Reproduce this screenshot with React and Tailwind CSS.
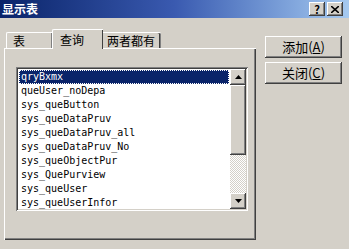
import React from 'react';

const raised =
  'shadow-[inset_-1px_-1px_#404040,inset_1px_1px_#ffffff,inset_-2px_-2px_#808080,inset_2px_2px_#d4d0c8]';
const sunken =
  'shadow-[inset_1px_1px_#808080,inset_-1px_-1px_#ffffff,inset_2px_2px_#404040,inset_-2px_-2px_#d4d0c8]';

const queries = [
  'qryBxmx',
  'queUser_noDepa',
  'sys_queButton',
  'sys_queDataPruv',
  'sys_queDataPruv_all',
  'sys_queDataPruv_No',
  'sys_queObjectPur',
  'sys_QuePurview',
  'sys_queUser',
  'sys_queUserInfor',
];

function TitleButton({ children }) {
  return (
    <div
      className={`w-[16px] h-[14px] bg-[#d4d0c8] ${raised} flex items-center justify-center text-black text-[11px] font-bold leading-none`}
    >
      {children}
    </div>
  );
}

function ScrollArrow({ up }) {
  return (
    <div className={`w-[16px] h-[16px] bg-[#d4d0c8] ${raised} flex items-center justify-center`}>
      <svg width="7" height="4" viewBox="0 0 7 4">
        {up ? <path d="M3.5 0 L7 4 L0 4 Z" fill="#000" /> : <path d="M0 0 L7 0 L3.5 4 Z" fill="#000" />}
      </svg>
    </div>
  );
}

function Button({ label, hot }) {
  return (
    <div
      className={`w-[77px] h-[22px] bg-[#d4d0c8] ${raised} flex items-center justify-center text-[13px] text-black`}
    >
      {label}(<span className="underline">{hot}</span>)
    </div>
  );
}

export default function App() {
  return (
    <div
      className="w-[349px] h-[249px] bg-[#d4d0c8] overflow-hidden"
      style={{ fontFamily: '"Noto Sans CJK SC", "Liberation Sans", sans-serif' }}
    >
      {/* title bar */}
      <div className="h-[18px] flex items-center justify-between pl-[2px] pr-[6px] bg-gradient-to-r from-[#0a246a] via-[#3a5ab0] to-[#a6caf0]">
        <span className="text-white text-[12px] font-bold leading-none">显示表</span>
        <div className="flex gap-[2px]">
          <TitleButton>?</TitleButton>
          <TitleButton>
            <svg width="8" height="7" viewBox="0 0 8 7">
              <path d="M0 0 L8 7 M8 0 L0 7" stroke="#000" strokeWidth="1.6" />
            </svg>
          </TitleButton>
        </div>
      </div>

      <div className="flex pt-[11px]">
        {/* tabs + panel */}
        <div className="ml-[4px] w-[252px]">
          <div className="flex items-end h-[19px] pl-[2px]">
            <div className="w-[46px] h-[16px] border-t border-l border-white shadow-[inset_-1px_0_#808080] rounded-tl-[2px] text-[12px] leading-none flex items-center pl-[6px] text-black">
              表
            </div>
            <div className="w-[51px] h-[20px] -mb-[1px] bg-[#d4d0c8] border-t border-l border-white shadow-[inset_-1px_0_#404040] rounded-tl-[2px] text-[12px] leading-none flex items-center pl-[7px] text-black relative z-10">
              查询
            </div>
            <div className="w-[58px] h-[16px] border-t border-white shadow-[inset_-1px_0_#808080,inset_-2px_0_#404040] rounded-tr-[2px] text-[12px] leading-none flex items-center pl-[4px] text-black">
              两者都有
            </div>
          </div>
          <div className="h-[192px] border-t border-l border-white shadow-[inset_-1px_-1px_#404040,inset_-2px_-2px_#808080] pt-[18px] pl-[11px]">
            <div className={`w-[232px] h-[144px] bg-white ${sunken} p-[2px] flex`}>
              <div
                className="flex-1 pt-[1px] pl-[1px] pr-[1px]"
                style={{ fontFamily: '"DejaVu Sans Mono", monospace' }}
              >
                {queries.map((q, i) => (
                  <div
                    key={q}
                    className={`h-[14px] text-[10px] leading-[14px] pl-[2px] ${
                      i === 0
                        ? 'bg-[#0a246a] text-white outline-1 outline-dotted outline-[#fff] -outline-offset-1'
                        : 'text-black'
                    }`}
                  >
                    {q}
                  </div>
                ))}
              </div>
              <div className="w-[16px] flex flex-col">
                <ScrollArrow up />
                <div className={`h-[70px] bg-[#d4d0c8] ${raised}`} />
                <div className="flex-1 bg-[repeating-conic-gradient(#d4d0c8_0_25%,#ffffff_0_50%)] bg-[length:2px_2px]" />
                <ScrollArrow />
              </div>
            </div>
          </div>
        </div>

        {/* buttons */}
        <div className="ml-[9px] pt-[7px] flex flex-col gap-[4px]">
          <Button label="添加" hot="A" />
          <Button label="关闭" hot="C" />
        </div>
      </div>
    </div>
  );
}
